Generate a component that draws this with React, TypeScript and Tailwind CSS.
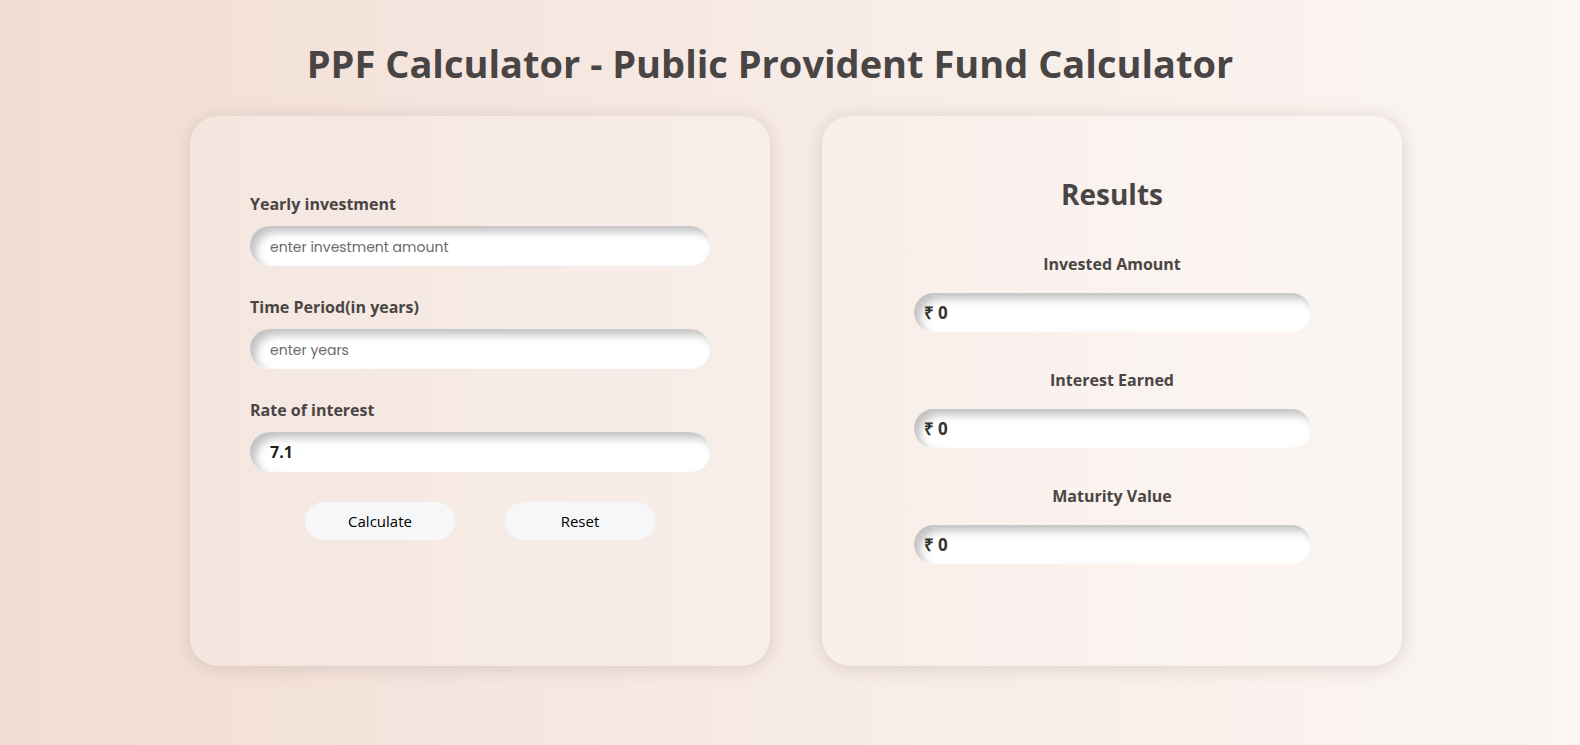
import React, { useState } from 'react'

const heading = "font-['Segoe_UI','Open_Sans',sans-serif]"
const inset =
  'shadow-[inset_6px_6px_9px_#c2c2c2,inset_-4px_-4px_8px_#ffffff]'

function Field({
  label,
  placeholder,
  value,
  onChange,
}: {
  label: string
  placeholder: string
  value: string
  onChange: (v: string) => void
}) {
  return (
    <div className="flex flex-col">
      <label className={`${heading} text-base font-bold text-[#4a4545] leading-6`}>
        {label}
      </label>
      <input
        value={value}
        placeholder={placeholder}
        onChange={(e) => onChange(e.target.value)}
        className={`mt-[10px] h-10 w-full rounded-full bg-white px-5 text-base font-bold text-[#1e1e1e] outline-none placeholder:font-normal placeholder:text-sm placeholder:text-[#6b6b6b] placeholder:font-['Poppins','Lato',sans-serif] ${heading} ${inset}`}
      />
    </div>
  )
}

function Result({ label, value }: { label: string; value: string }) {
  return (
    <div className="flex flex-col items-center">
      <div className={`${heading} text-base font-bold text-[#4a4545] leading-6`}>
        {label}
      </div>
      <div
        className={`mt-[17px] flex h-[39px] w-[397px] items-center rounded-full bg-white px-[10px] text-[17px] font-bold text-[#333] ${heading} ${inset}`}
      >
        ₹ {value}
      </div>
    </div>
  )
}

export default function App() {
  const [amount, setAmount] = useState('')
  const [years, setYears] = useState('')
  const [rate, setRate] = useState('7.1')
  const [res, setRes] = useState({ invested: 0, interest: 0, maturity: 0 })

  const calculate = () => {
    const p = parseFloat(amount) || 0
    const n = parseInt(years) || 0
    const r = (parseFloat(rate) || 0) / 100
    let total = 0
    for (let i = 0; i < n; i++) total = (total + p) * (1 + r)
    const invested = p * n
    setRes({
      invested,
      interest: Math.round(total - invested),
      maturity: Math.round(total),
    })
  }

  const reset = () => {
    setAmount('')
    setYears('')
    setRate('7.1')
    setRes({ invested: 0, interest: 0, maturity: 0 })
  }

  return (
    <div className="min-h-[745px] w-full bg-[linear-gradient(to_right,#f1ddd4,#f7ebe5_50%,#fbf6f2)] pt-[40px]">
      <h1
        className={`${heading} text-center text-[38px] font-bold leading-[46px] text-[#4a4545] pr-[40px]`}
      >
        PPF Calculator - Public Provident Fund Calculator
      </h1>

      <div className="mt-[30px] flex justify-center gap-[52px] pl-[12px]">
        {/* inputs */}
        <div className="flex h-[550px] w-[580px] flex-col rounded-[28px] bg-white/20 px-[60px] pt-[76px] shadow-[0_2px_18px_rgba(120,90,80,0.22)]">
          <div className="flex flex-col gap-[29px]">
            <Field
              label="Yearly investment"
              placeholder="enter investment amount"
              value={amount}
              onChange={setAmount}
            />
            <Field
              label="Time Period(in years)"
              placeholder="enter years"
              value={years}
              onChange={setYears}
            />
            <Field
              label="Rate of interest"
              placeholder="enter rate"
              value={rate}
              onChange={setRate}
            />
          </div>
          <div className="mt-[30px] flex justify-center gap-[50px]">
            <button
              onClick={calculate}
              className={`${heading} h-[38px] w-[150px] rounded-full bg-[#f5f7f9] text-[15px] text-black`}
            >
              Calculate
            </button>
            <button
              onClick={reset}
              className={`${heading} h-[38px] w-[150px] rounded-full bg-[#f5f7f9] text-[15px] text-black`}
            >
              Reset
            </button>
          </div>
        </div>

        {/* results */}
        <div className="flex h-[550px] w-[580px] flex-col items-center rounded-[28px] bg-white/20 pt-[58px] shadow-[0_2px_18px_rgba(120,90,80,0.22)]">
          <h2
            className={`${heading} text-[28px] font-bold leading-[40px] text-[#4a4545]`}
          >
            Results
          </h2>
          <div className="mt-[38px] flex flex-col gap-[36px]">
            <Result label="Invested Amount" value={String(res.invested)} />
            <Result label="Interest Earned" value={String(res.interest)} />
            <Result label="Maturity Value" value={String(res.maturity)} />
          </div>
        </div>
      </div>
    </div>
  )
}
